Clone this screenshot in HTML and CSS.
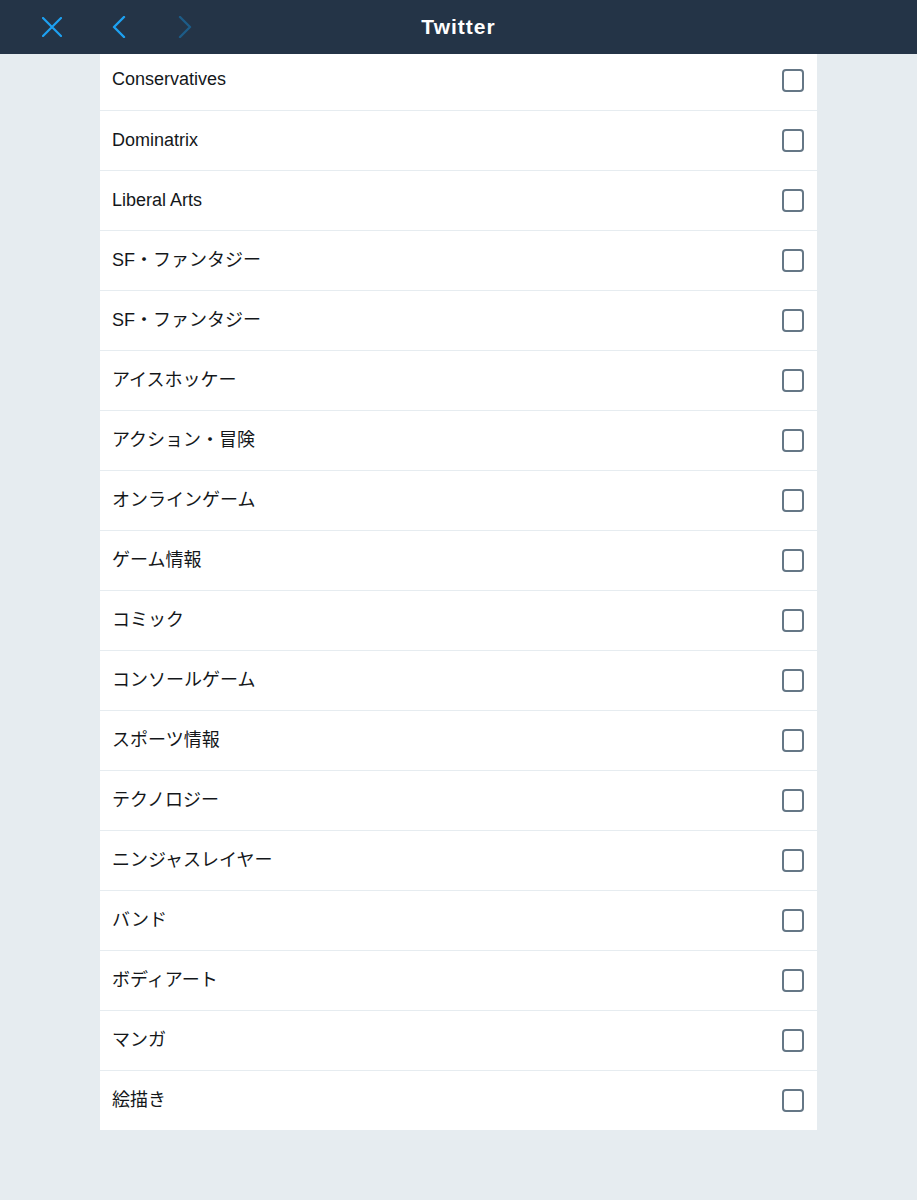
FILE: index.html
```html
<!DOCTYPE html>
<html lang="ja">
<head>
    <meta charset="UTF-8">
    <meta name="viewport" content="width=device-width, initial-scale=1.0">
    <title>Twitter</title>
    <link rel="stylesheet" href="styles.css">
</head>
<body>
    <header class="topbar">
        <div class="topbar-buttons">
            <button class="icon-btn" aria-label="Close">
                <svg width="20" height="20" viewBox="0 0 20 20">
                    <path d="M1 1 L19 19 M19 1 L1 19" stroke="currentColor" stroke-width="2.2" stroke-linecap="round" fill="none"/>
                </svg>
            </button>
            <button class="icon-btn" aria-label="Back">
                <svg width="14" height="22" viewBox="0 0 14 22">
                    <path d="M12 1 L2 11 L12 21" stroke="currentColor" stroke-width="2.4" stroke-linecap="round" stroke-linejoin="round" fill="none"/>
                </svg>
            </button>
            <button class="icon-btn disabled" aria-label="Forward">
                <svg width="14" height="22" viewBox="0 0 14 22">
                    <path d="M2 1 L12 11 L2 21" stroke="currentColor" stroke-width="2.4" stroke-linecap="round" stroke-linejoin="round" fill="none"/>
                </svg>
            </button>
        </div>
        <h1 class="topbar-title">Twitter</h1>
    </header>

    <main class="page">
        <ul class="topic-list">
            <li class="topic"><span class="topic-name">Conservatives</span><span class="checkbox"></span></li>
            <li class="topic"><span class="topic-name">Dominatrix</span><span class="checkbox"></span></li>
            <li class="topic"><span class="topic-name">Liberal Arts</span><span class="checkbox"></span></li>
            <li class="topic"><span class="topic-name">SF・ファンタジー</span><span class="checkbox"></span></li>
            <li class="topic"><span class="topic-name">SF・ファンタジー</span><span class="checkbox"></span></li>
            <li class="topic"><span class="topic-name">アイスホッケー</span><span class="checkbox"></span></li>
            <li class="topic"><span class="topic-name">アクション・冒険</span><span class="checkbox"></span></li>
            <li class="topic"><span class="topic-name">オンラインゲーム</span><span class="checkbox"></span></li>
            <li class="topic"><span class="topic-name">ゲーム情報</span><span class="checkbox"></span></li>
            <li class="topic"><span class="topic-name">コミック</span><span class="checkbox"></span></li>
            <li class="topic"><span class="topic-name">コンソールゲーム</span><span class="checkbox"></span></li>
            <li class="topic"><span class="topic-name">スポーツ情報</span><span class="checkbox"></span></li>
            <li class="topic"><span class="topic-name">テクノロジー</span><span class="checkbox"></span></li>
            <li class="topic"><span class="topic-name">ニンジャスレイヤー</span><span class="checkbox"></span></li>
            <li class="topic"><span class="topic-name">バンド</span><span class="checkbox"></span></li>
            <li class="topic"><span class="topic-name">ボディアート</span><span class="checkbox"></span></li>
            <li class="topic"><span class="topic-name">マンガ</span><span class="checkbox"></span></li>
            <li class="topic"><span class="topic-name">絵描き</span><span class="checkbox"></span></li>
        </ul>
    </main>
</body>
</html>
```

FILE: styles.css
```css
body {
    margin: 0;
    background: #e6ecf0;
    font-family: "Liberation Sans", "Noto Sans CJK JP", sans-serif;
    color: #14171a;
}

.topbar {
    position: fixed;
    top: 0;
    left: 0;
    right: 0;
    height: 54px;
    background: #243447;
    z-index: 10;
}

.topbar-buttons {
    display: flex;
    align-items: center;
    height: 54px;
    padding-left: 42px;
}

.icon-btn {
    display: flex;
    align-items: center;
    justify-content: center;
    padding: 0;
    border: none;
    background: none;
    color: #1da1f2;
    cursor: pointer;
}

.icon-btn:nth-child(2) {
    margin-left: 50px;
}

.icon-btn:nth-child(3) {
    margin-left: 52px;
}

.icon-btn.disabled {
    color: #1d5c87;
}

.topbar-title {
    position: absolute;
    top: 0;
    left: 0;
    right: 0;
    margin: 0;
    line-height: 54px;
    text-align: center;
    font-size: 21px;
    font-weight: bold;
    letter-spacing: 1px;
    color: #ffffff;
    pointer-events: none;
}

.page {
    padding-top: 50px;
    padding-bottom: 70px;
}

.topic-list {
    list-style: none;
    margin: 0 auto;
    padding: 0;
    width: 717px;
    background: #ffffff;
}

.topic {
    display: flex;
    align-items: center;
    justify-content: space-between;
    height: 59px;
    padding: 0 13px 0 12px;
    border-top: 1px solid #e6ecf0;
    font-size: 18px;
}

.topic:first-child {
    height: 60px;
    border-top: none;
}

.topic-name {
    line-height: 20px;
    margin-bottom: 2px;
}

.checkbox {
    width: 18px;
    height: 19px;
    border: 2px solid #657786;
    border-radius: 4px;
}
```
